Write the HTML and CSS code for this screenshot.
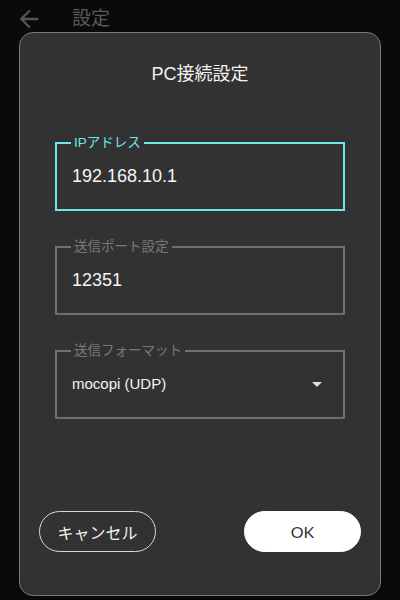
FILE: index.html
```html
<!DOCTYPE html>
<html lang="ja">
<head>
<meta charset="utf-8">
<title>PC接続設定</title>
<link rel="stylesheet" href="styles.css">
</head>
<body>
<header class="topbar">
  <svg class="back" viewBox="0 0 24 24" width="28" height="28"><path d="M20 11H7.83l5.59-5.59L12 4l-8 8 8 8 1.41-1.41L7.83 13H20v-2z"/></svg>
  <span class="page-title">設定</span>
</header>
<div class="dialog">
  <h1 class="dialog-title">PC接続設定</h1>
  <div class="fields">
    <fieldset class="field active">
      <legend>IPアドレス</legend>
      <div class="value">192.168.10.1</div>
    </fieldset>
    <fieldset class="field">
      <legend>送信ポート設定</legend>
      <div class="value">12351</div>
    </fieldset>
    <fieldset class="field">
      <legend>送信フォーマット</legend>
      <div class="value select"><span class="sel-text">mocopi (UDP)</span><span class="caret"></span></div>
    </fieldset>
  </div>
  <div class="actions">
    <button class="btn cancel">キャンセル</button>
    <button class="btn ok">OK</button>
  </div>
</div>
</body>
</html>
```
FILE: styles.css
```css
html, body {
  margin: 0;
  padding: 0;
  height: 100%;
}
body {
  background: #0a0a0a;
  font-family: "Liberation Sans", "Noto Sans CJK JP", sans-serif;
  color: #f0f0f0;
  position: relative;
  overflow: hidden;
}
.topbar {
  display: flex;
  align-items: center;
  height: 38px;
  padding-left: 15px;
}
.back {
  fill: #555;
  display: block;
}
.page-title {
  margin-left: 29px;
  font-size: 19px;
  color: #5a5a5a;
  line-height: 24px;
}
.dialog {
  position: absolute;
  top: 32px;
  left: 19px;
  width: 360px;
  height: 562px;
  border: 1px solid #7a7a7a;
  border-radius: 14px;
  background: #323232;
  display: flex;
  flex-direction: column;
}
.dialog-title {
  margin: 29px 0 0;
  text-align: center;
  font-size: 18px;
  font-weight: 400;
  line-height: 24px;
  color: #f2f2f2;
}
.fields {
  margin-top: 50px;
  padding: 0 35px;
  display: flex;
  flex-direction: column;
  gap: 29px;
}
.field {
  margin: 0;
  padding: 0 14px 0 15px;
  border: 2px solid #6f6f6f;
  min-width: 0;
}
.field legend {
  font-size: 13.5px;
  line-height: 14px;
  padding: 0 3px;
  margin-left: -1px;
  color: #7a7a7a;
}
.field.active {
  border-color: #6ee6ea;
}
.field.active legend {
  color: #6ee6ea;
}
.value {
  padding: 14px 0 21px;
  font-size: 18px;
  line-height: 24px;
  color: #f4f4f4;
}
.select {
  display: flex;
  align-items: center;
  justify-content: space-between;
}
.sel-text {
  font-size: 15px;
}
.caret {
  width: 0;
  height: 0;
  border-left: 5px solid transparent;
  border-right: 5px solid transparent;
  border-top: 5px solid #e0e0e0;
  margin-right: 7px;
}
.actions {
  margin-top: 92px;
  padding: 0 19px;
  display: flex;
  justify-content: space-between;
}
.btn {
  width: 117px;
  height: 41px;
  border-radius: 21px;
  font-family: "Liberation Sans", "Noto Sans CJK JP", sans-serif;
  font-size: 16px;
  padding: 0;
  cursor: pointer;
}
.cancel {
  background: transparent;
  border: 1px solid #d8d8d8;
  color: #f2f2f2;
}
.ok {
  background: #ffffff;
  border: 1px solid #ffffff;
  color: #333333;
  font-family: Lato, "Liberation Sans", sans-serif;
  font-weight: 400;
}
```
